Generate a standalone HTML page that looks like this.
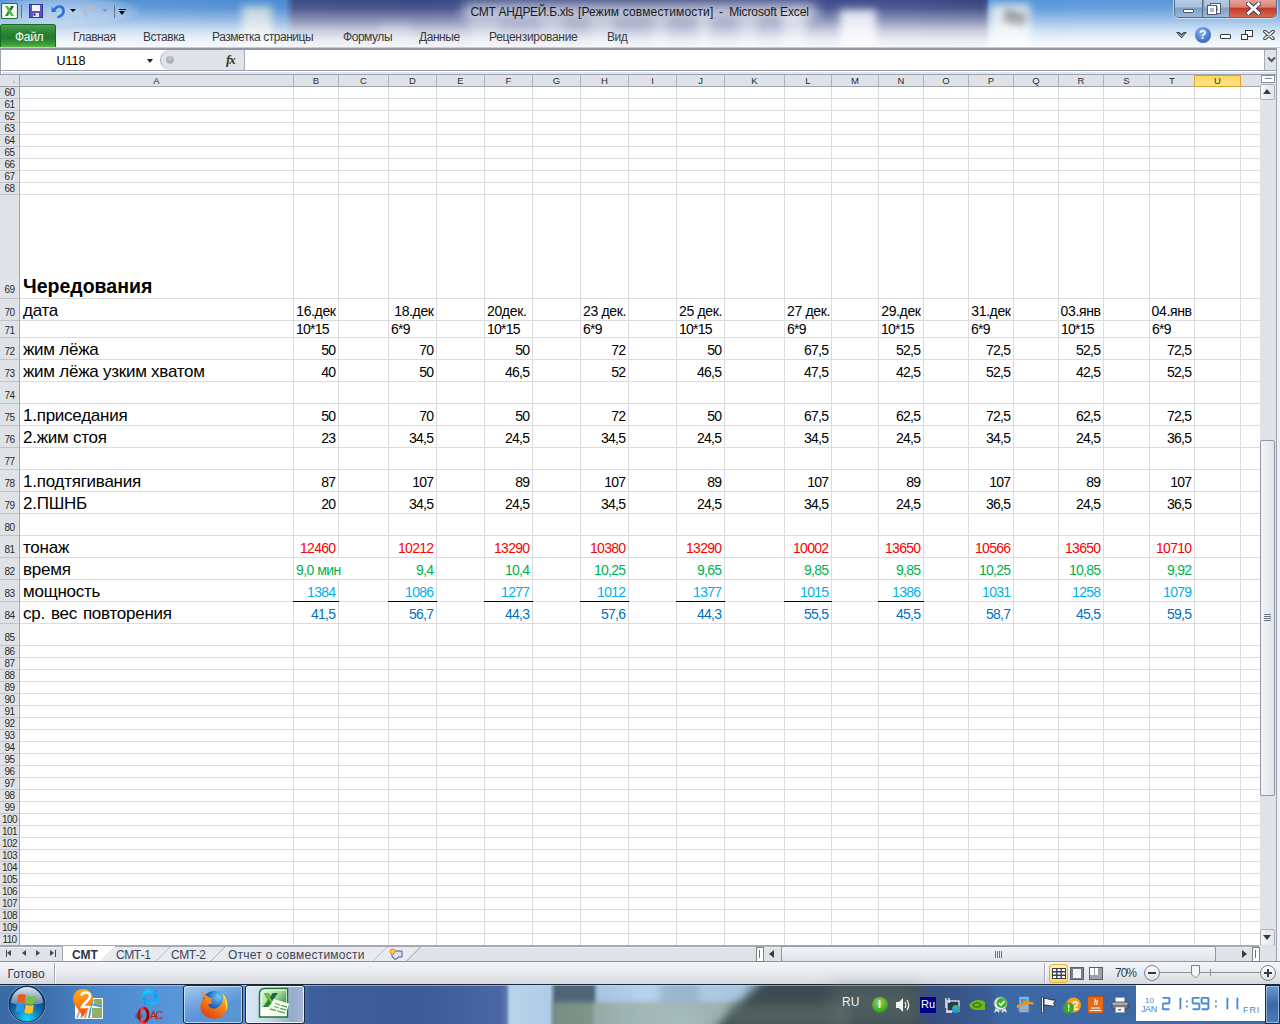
<!DOCTYPE html><html><head><meta charset="utf-8"><style>
*{margin:0;padding:0;box-sizing:border-box}
html,body{width:1280px;height:1024px;overflow:hidden;background:#fff;font-family:"Liberation Sans",sans-serif}
.a{position:absolute}
.t{position:absolute;white-space:nowrap;line-height:1}
.gv{position:absolute;width:1px;background:#dadcdd}
.gh{position:absolute;height:1px;background:#dadcdd}
.rh{position:absolute;left:0;width:19px;text-align:center;font-size:10px;color:#2a2a2a;line-height:1;white-space:nowrap;letter-spacing:-0.6px}
.ch{position:absolute;top:75px;height:11px;font-size:9.5px;color:#2a2a2a;text-align:center;line-height:12px}
.c{position:absolute;white-space:nowrap;line-height:1;color:#000}
.cr{transform-origin:right}
.cl{transform-origin:left}
</style></head><body>

<div class="a" style="left:0;top:0;width:1280px;height:48px;background:linear-gradient(90deg,#5d98d6 0px,#5592d4 150px,#4a8ad2 285px,#3e4c86 294px,#3a4884 420px,#3e4c88 520px,#38457e 640px,#3e4b88 760px,#404e8c 900px,#36457e 986px,#5294da 990px,#5a98da 1100px,#5a9ad8 1280px)"></div>
<div class="a" style="left:242px;top:6px;width:30px;height:40px;background:#dfe8d8;opacity:0.75;filter:blur(4px)"></div>
<div class="a" style="left:652px;top:16px;width:16px;height:32px;background:#e8eef8;opacity:0.35;filter:blur(4px)"></div>
<div class="a" style="left:697px;top:14px;width:14px;height:34px;background:#e8eef8;opacity:0.45;filter:blur(4px)"></div>
<div class="a" style="left:738px;top:14px;width:20px;height:34px;background:#e0e8f4;opacity:0.4;filter:blur(4px)"></div>
<div class="a" style="left:782px;top:12px;width:24px;height:36px;background:#eef2fa;opacity:0.55;filter:blur(4px)"></div>
<div class="a" style="left:840px;top:10px;width:36px;height:38px;background:#f4f7fc;opacity:0.85;filter:blur(4px)"></div>
<div class="a" style="left:990px;top:4px;width:40px;height:46px;background:#e8ece6;opacity:0.85;filter:blur(4px)"></div>
<div class="a" style="left:540px;top:16px;width:24px;height:32px;background:#e8eef8;opacity:0.3;filter:blur(4px)"></div>
<div class="a" style="left:590px;top:16px;width:24px;height:32px;background:#e8eef8;opacity:0.35;filter:blur(4px)"></div>
<div class="a" style="left:470px;top:20px;width:30px;height:28px;background:#e8eef8;opacity:0.3;filter:blur(4px)"></div>
<div class="a" style="left:380px;top:24px;width:30px;height:24px;background:#e8eef8;opacity:0.25;filter:blur(4px)"></div>
<div class="a" style="left:1004px;top:12px;width:22px;height:14px;background:#505560;opacity:0.7;filter:blur(3px);transform:rotate(15deg)"></div>
<div class="a" style="left:0;top:0;width:1280px;height:48px;background:linear-gradient(180deg,rgba(255,255,255,0) 0px,rgba(255,255,255,0.08) 8px,rgba(255,255,255,0.4) 20px,rgba(255,255,255,0.7) 30px,rgba(255,255,255,0.88) 39px,rgba(255,255,255,0.94) 46px)"></div>
<div class="a" style="left:-10px;top:-4px;width:150px;height:30px;background:radial-gradient(ellipse at center,rgba(230,240,250,0.55) 0%,rgba(230,240,250,0.3) 55%,rgba(230,240,250,0) 75%)"></div>
<div class="a" style="left:462px;top:3px;width:356px;height:18px;background:rgba(255,255,255,0.6);border-radius:9px;filter:blur(6px)"></div>
<div class="t" style="left:470.5px;top:6px;font-size:12px;letter-spacing:-0.3px;color:#1a1a1a">СМТ АНДРЕЙ.Б.xls</div>
<div class="t" style="left:578px;top:6px;font-size:12px;letter-spacing:0.15px;color:#1a1a1a">[Режим совместимости]</div>
<div class="t" style="left:719px;top:6px;font-size:12px;letter-spacing:0px;color:#1a1a1a">-</div>
<div class="t" style="left:729.2px;top:6px;font-size:12px;letter-spacing:-0.12px;color:#1a1a1a">Microsoft Excel</div>
<svg class="a" style="left:1px;top:3px" width="17" height="16" viewBox="0 0 17 16">
<rect x="0.5" y="0.5" width="16" height="15" rx="1.5" fill="#f4faf2" stroke="#1d7a34" stroke-width="1.2"/>
<path d="M4 3 L7 3 L13 13 L10 13 Z" fill="#58b848"/>
<path d="M10 3 L13 3 L10 8 L8.5 6 Z" fill="#1d6e36"/>
<path d="M4 13 L7 13 L8.5 10 L7 8 Z" fill="#2e8a3a"/>
</svg>
<div class="a" style="left:21px;top:5px;width:1px;height:13px;background:#6a7380"></div>
<svg class="a" style="left:29px;top:4px" width="15" height="14" viewBox="0 0 15 14">
<rect x="0" y="0" width="14" height="14" rx="1" fill="#5a50c8"/>
<rect x="0.5" y="0.5" width="13" height="13" fill="none" stroke="#3a2fa0" stroke-width="1"/>
<rect x="3" y="1" width="8" height="6" fill="#f4f6fa"/>
<rect x="4" y="9" width="6" height="4" fill="#e8e8ec"/>
<rect x="4.5" y="9.5" width="2" height="2" fill="#111"/>
</svg>
<svg class="a" style="left:51px;top:4px" width="15" height="14" viewBox="0 0 15 14">
<path d="M4 5 C6 1.5 12 1.5 12.5 6 C13 9.5 10 12 7.5 13" fill="none" stroke="#2f6fd8" stroke-width="2.6" stroke-linecap="round"/>
<path d="M0.5 2.5 L0.5 8 L6 8 Z" fill="#2f6fd8"/>
</svg>
<div class="a" style="left:70px;top:9px;width:0;height:0;border-left:3px solid transparent;border-right:3px solid transparent;border-top:3px solid #000"></div>
<svg class="a" style="left:82px;top:4px" width="15" height="13" viewBox="0 0 15 13">
<path d="M11 5 C9 1.5 3 1.5 2.5 6 C2 9 4 11 5 12" fill="none" stroke="#b8bcc0" stroke-width="2.4" stroke-linecap="round"/>
<path d="M14 2 L14 7 L9 7 Z" fill="#b8bcc0"/>
</svg>
<div class="a" style="left:102px;top:9px;width:0;height:0;border-left:3px solid transparent;border-right:3px solid transparent;border-top:3px solid #8c98a8"></div>
<div class="a" style="left:114px;top:5px;width:1px;height:13px;background:#6a7380"></div>
<div class="a" style="left:119px;top:9px;width:7px;height:1px;background:#000"></div>
<div class="a" style="left:119px;top:11px;width:0;height:0;border-left:3.5px solid transparent;border-right:3.5px solid transparent;border-top:4px solid #000"></div>
<div class="a" style="left:1174px;top:-1px;width:103px;height:19px;border:1px solid #5a6a80;border-top:none;border-radius:0 0 5px 5px;overflow:hidden;box-shadow:0 0 0 1px rgba(255,255,255,0.5)">
<div class="a" style="left:0;top:0;width:28px;height:18px;background:linear-gradient(180deg,#b9cde6 0%,#a7bfdc 45%,#7f9cc4 50%,#9db7d8 100%);border-right:1px solid #5a6a80"></div>
<div class="a" style="left:29px;top:0;width:26px;height:18px;background:linear-gradient(180deg,#b9cde6 0%,#a7bfdc 45%,#7f9cc4 50%,#9db7d8 100%);border-right:1px solid #5a6a80"></div>
<div class="a" style="left:55px;top:0;width:48px;height:18px;background:linear-gradient(180deg,#e8a8a0 0%,#d88070 45%,#c83a28 52%,#d86850 100%)"></div>
</div>
<div class="a" style="left:1183px;top:9px;width:11px;height:4px;background:#fff;border:1px solid #505a68;border-radius:1px"></div>
<div class="a" style="left:1211px;top:4px;width:9px;height:9px;border:2px solid #fff;outline:1px solid #505a68"></div>
<div class="a" style="left:1208px;top:6px;width:8px;height:8px;background:#a6bcd8;border:2px solid #fff;outline:1px solid #505a68"></div>
<svg class="a" style="left:1246px;top:2px" width="15" height="13" viewBox="0 0 15 13">
<path d="M2.5 2 L12.5 11 M12.5 2 L2.5 11" stroke="#3a4050" stroke-width="5" stroke-linecap="square"/>
<path d="M2.5 2 L12.5 11 M12.5 2 L2.5 11" stroke="#fff" stroke-width="3" stroke-linecap="square"/>
</svg>
<div class="a" style="left:0;top:24px;width:56px;height:23px;background:linear-gradient(180deg,#48a050 0%,#2a8434 35%,#237c2e 60%,#3a9a3a 85%,#58b840 100%);border:1px solid #1a6a26;border-bottom:none;border-radius:3px 3px 0 0"></div>
<div class="t" style="left:15px;top:31px;font-size:12px;color:#fff;letter-spacing:-0.3px">Файл</div>
<div class="t" style="left:73px;top:31px;font-size:12px;color:#3a3a3a;letter-spacing:-0.45px">Главная</div>
<div class="t" style="left:143px;top:31px;font-size:12px;color:#3a3a3a;letter-spacing:-0.45px">Вставка</div>
<div class="t" style="left:212px;top:31px;font-size:12px;color:#3a3a3a;letter-spacing:-0.45px">Разметка страницы</div>
<div class="t" style="left:343px;top:31px;font-size:12px;color:#3a3a3a;letter-spacing:-0.45px">Формулы</div>
<div class="t" style="left:419px;top:31px;font-size:12px;color:#3a3a3a;letter-spacing:-0.45px">Данные</div>
<div class="t" style="left:489px;top:31px;font-size:12px;color:#3a3a3a;letter-spacing:-0.3px">Рецензирование</div>
<div class="t" style="left:607px;top:31px;font-size:12px;color:#3a3a3a;letter-spacing:-0.45px">Вид</div>
<svg class="a" style="left:1176px;top:31px" width="11" height="8" viewBox="0 0 11 8"><path d="M1 1.5 L3 1.5 L5.5 4 L8 1.5 L10 1.5 L5.5 6.5 Z" fill="#fff" stroke="#3a3a3a" stroke-width="1.1" stroke-linejoin="round"/></svg>
<div class="a" style="left:1195px;top:27px;width:16px;height:16px;border-radius:50%;background:radial-gradient(circle at 40% 30%,#8ab4f0,#3a70c8 70%,#2a5aa8);"></div>
<div class="t" style="left:1199px;top:29px;font-size:12px;font-weight:bold;color:#fff">?</div>
<div class="a" style="left:1220px;top:34px;width:11px;height:5px;background:#fff;border:1px solid #3a3a3a;border-radius:1px"></div>
<div class="a" style="left:1245px;top:30px;width:8px;height:7px;border:1.5px solid #3a3a3a;background:#fff"></div>
<div class="a" style="left:1241px;top:34px;width:7px;height:6px;border:1.5px solid #3a3a3a;background:#fff"></div>
<svg class="a" style="left:1263px;top:30px" width="12" height="10" viewBox="0 0 12 10"><path d="M2 1.5 L10 8.5 M10 1.5 L2 8.5" stroke="#3a3a3a" stroke-width="3.6" stroke-linecap="round"/><path d="M2 1.5 L10 8.5 M10 1.5 L2 8.5" stroke="#fff" stroke-width="1.6" stroke-linecap="round"/></svg>
<div class="a" style="left:0;top:47px;width:1280px;height:1px;background:#b4d0ee"></div>
<div class="a" style="left:0;top:48px;width:1280px;height:27px;background:#fff"></div>
<div class="a" style="left:0;top:48px;width:1280px;height:2px;background:#8e98a4"></div>
<div class="a" style="left:0;top:70px;width:1280px;height:1px;background:#9aa2ac"></div>
<div class="a" style="left:2px;top:72px;width:1274px;height:2px;background:#e2e6f2"></div>
<div class="a" style="left:0;top:74px;width:1280px;height:1px;background:#9aa2ac"></div>
<div class="a" style="left:0;top:48px;width:1px;height:38px;background:#9aa2ac"></div>
<div class="t" style="left:56.5px;top:54.5px;font-size:12.5px;color:#000">U118</div>
<div class="a" style="left:147px;top:59px;width:0;height:0;border-left:3.5px solid transparent;border-right:3.5px solid transparent;border-top:4px solid #222"></div>
<div class="a" style="left:160px;top:50px;width:85px;height:20px;background:#dfe2e7;border-radius:11px 0 0 11px;border-left:1px solid #a8aeb6;border-right:1px solid #a8aeb6"></div>
<div class="a" style="left:166px;top:56px;width:8px;height:8px;border-radius:50%;background:radial-gradient(circle at 50% 35%,#c8ccd2,#a8acb4 60%,#f0f2f4 100%)"></div>
<div class="t" style="left:226px;top:53px;font-size:13px;font-style:italic;font-weight:bold;font-family:'Liberation Serif',serif;color:#333;letter-spacing:-1px">fx</div>
<div class="a" style="left:1264px;top:50px;width:15px;height:20px;background:#dfe2e7;border-left:1px solid #a8aeb6"></div>
<div class="a" style="left:1279px;top:48px;width:1px;height:27px;background:#9aa2ac"></div>
<svg class="a" style="left:1266px;top:56px" width="11" height="8" viewBox="0 0 11 8"><path d="M2 1.5 L5.5 5 L9 1.5" fill="none" stroke="#555" stroke-width="2"/></svg>
<div class="a" style="left:0;top:75px;width:1260px;height:11px;background:#dfe3e8"></div>
<div class="a" style="left:0;top:86px;width:19px;height:859px;background:#dfe3e8"></div>
<div class="a" style="left:0;top:86px;width:1260px;height:1px;background:#9ea5ad"></div>
<div class="a" style="left:19px;top:75px;width:1px;height:870px;background:#9ea5ad"></div>
<svg class="a" style="left:12px;top:80px" width="3" height="3" viewBox="0 0 3 3"><path d="M3 0 L3 3 L0 3 Z" fill="#c0c5cc"/></svg>
<div class="a" style="left:1194px;top:75px;width:47px;height:12px;background:linear-gradient(#ffd65a,#ffe690);border:1px solid #dfa030"></div>
<div class="ch" style="left:20px;width:273px">A</div>
<div class="a" style="left:293px;top:75px;width:1px;height:11px;background:#aeb4bc"></div>
<div class="ch" style="left:294px;width:44px">B</div>
<div class="a" style="left:338px;top:75px;width:1px;height:11px;background:#aeb4bc"></div>
<div class="ch" style="left:339px;width:49px">C</div>
<div class="a" style="left:388px;top:75px;width:1px;height:11px;background:#aeb4bc"></div>
<div class="ch" style="left:389px;width:47px">D</div>
<div class="a" style="left:436px;top:75px;width:1px;height:11px;background:#aeb4bc"></div>
<div class="ch" style="left:437px;width:47px">E</div>
<div class="a" style="left:484px;top:75px;width:1px;height:11px;background:#aeb4bc"></div>
<div class="ch" style="left:485px;width:47px">F</div>
<div class="a" style="left:532px;top:75px;width:1px;height:11px;background:#aeb4bc"></div>
<div class="ch" style="left:533px;width:47px">G</div>
<div class="a" style="left:580px;top:75px;width:1px;height:11px;background:#aeb4bc"></div>
<div class="ch" style="left:581px;width:47px">H</div>
<div class="a" style="left:628px;top:75px;width:1px;height:11px;background:#aeb4bc"></div>
<div class="ch" style="left:629px;width:47px">I</div>
<div class="a" style="left:676px;top:75px;width:1px;height:11px;background:#aeb4bc"></div>
<div class="ch" style="left:677px;width:47px">J</div>
<div class="a" style="left:724px;top:75px;width:1px;height:11px;background:#aeb4bc"></div>
<div class="ch" style="left:725px;width:59px">K</div>
<div class="a" style="left:784px;top:75px;width:1px;height:11px;background:#aeb4bc"></div>
<div class="ch" style="left:785px;width:46px">L</div>
<div class="a" style="left:831px;top:75px;width:1px;height:11px;background:#aeb4bc"></div>
<div class="ch" style="left:832px;width:46px">M</div>
<div class="a" style="left:878px;top:75px;width:1px;height:11px;background:#aeb4bc"></div>
<div class="ch" style="left:879px;width:44px">N</div>
<div class="a" style="left:923px;top:75px;width:1px;height:11px;background:#aeb4bc"></div>
<div class="ch" style="left:924px;width:44px">O</div>
<div class="a" style="left:968px;top:75px;width:1px;height:11px;background:#aeb4bc"></div>
<div class="ch" style="left:969px;width:44px">P</div>
<div class="a" style="left:1013px;top:75px;width:1px;height:11px;background:#aeb4bc"></div>
<div class="ch" style="left:1014px;width:44px">Q</div>
<div class="a" style="left:1058px;top:75px;width:1px;height:11px;background:#aeb4bc"></div>
<div class="ch" style="left:1059px;width:44px">R</div>
<div class="a" style="left:1103px;top:75px;width:1px;height:11px;background:#aeb4bc"></div>
<div class="ch" style="left:1104px;width:45px">S</div>
<div class="a" style="left:1149px;top:75px;width:1px;height:11px;background:#aeb4bc"></div>
<div class="ch" style="left:1150px;width:44px">T</div>
<div class="ch" style="left:1195px;width:45px">U</div>
<div class="gv" style="left:293px;top:87px;height:858px"></div>
<div class="gv" style="left:338px;top:87px;height:858px"></div>
<div class="gv" style="left:388px;top:87px;height:858px"></div>
<div class="gv" style="left:436px;top:87px;height:858px"></div>
<div class="gv" style="left:484px;top:87px;height:858px"></div>
<div class="gv" style="left:532px;top:87px;height:858px"></div>
<div class="gv" style="left:580px;top:87px;height:858px"></div>
<div class="gv" style="left:628px;top:87px;height:858px"></div>
<div class="gv" style="left:676px;top:87px;height:858px"></div>
<div class="gv" style="left:724px;top:87px;height:858px"></div>
<div class="gv" style="left:784px;top:87px;height:858px"></div>
<div class="gv" style="left:831px;top:87px;height:858px"></div>
<div class="gv" style="left:878px;top:87px;height:858px"></div>
<div class="gv" style="left:923px;top:87px;height:858px"></div>
<div class="gv" style="left:968px;top:87px;height:858px"></div>
<div class="gv" style="left:1013px;top:87px;height:858px"></div>
<div class="gv" style="left:1058px;top:87px;height:858px"></div>
<div class="gv" style="left:1103px;top:87px;height:858px"></div>
<div class="gv" style="left:1149px;top:87px;height:858px"></div>
<div class="gv" style="left:1194px;top:87px;height:858px"></div>
<div class="gv" style="left:1240px;top:87px;height:858px"></div>
<div class="gh" style="left:20px;top:98px;width:1240px"></div>
<div class="gh" style="left:20px;top:110px;width:1240px"></div>
<div class="gh" style="left:20px;top:122px;width:1240px"></div>
<div class="gh" style="left:20px;top:134px;width:1240px"></div>
<div class="gh" style="left:20px;top:146px;width:1240px"></div>
<div class="gh" style="left:20px;top:158px;width:1240px"></div>
<div class="gh" style="left:20px;top:170px;width:1240px"></div>
<div class="gh" style="left:20px;top:182px;width:1240px"></div>
<div class="gh" style="left:20px;top:194px;width:1240px"></div>
<div class="gh" style="left:20px;top:298px;width:1240px"></div>
<div class="gh" style="left:20px;top:320px;width:1240px"></div>
<div class="gh" style="left:20px;top:337px;width:1240px"></div>
<div class="gh" style="left:20px;top:359px;width:1240px"></div>
<div class="gh" style="left:20px;top:381px;width:1240px"></div>
<div class="gh" style="left:20px;top:403px;width:1240px"></div>
<div class="gh" style="left:20px;top:425px;width:1240px"></div>
<div class="gh" style="left:20px;top:447px;width:1240px"></div>
<div class="gh" style="left:20px;top:469px;width:1240px"></div>
<div class="gh" style="left:20px;top:491px;width:1240px"></div>
<div class="gh" style="left:20px;top:513px;width:1240px"></div>
<div class="gh" style="left:20px;top:535px;width:1240px"></div>
<div class="gh" style="left:20px;top:557px;width:1240px"></div>
<div class="gh" style="left:20px;top:579px;width:1240px"></div>
<div class="gh" style="left:20px;top:601px;width:1240px"></div>
<div class="gh" style="left:20px;top:623px;width:1240px"></div>
<div class="gh" style="left:20px;top:645px;width:1240px"></div>
<div class="gh" style="left:20px;top:657px;width:1240px"></div>
<div class="gh" style="left:20px;top:669px;width:1240px"></div>
<div class="gh" style="left:20px;top:681px;width:1240px"></div>
<div class="gh" style="left:20px;top:693px;width:1240px"></div>
<div class="gh" style="left:20px;top:705px;width:1240px"></div>
<div class="gh" style="left:20px;top:717px;width:1240px"></div>
<div class="gh" style="left:20px;top:729px;width:1240px"></div>
<div class="gh" style="left:20px;top:741px;width:1240px"></div>
<div class="gh" style="left:20px;top:753px;width:1240px"></div>
<div class="gh" style="left:20px;top:765px;width:1240px"></div>
<div class="gh" style="left:20px;top:777px;width:1240px"></div>
<div class="gh" style="left:20px;top:789px;width:1240px"></div>
<div class="gh" style="left:20px;top:801px;width:1240px"></div>
<div class="gh" style="left:20px;top:813px;width:1240px"></div>
<div class="gh" style="left:20px;top:825px;width:1240px"></div>
<div class="gh" style="left:20px;top:837px;width:1240px"></div>
<div class="gh" style="left:20px;top:849px;width:1240px"></div>
<div class="gh" style="left:20px;top:861px;width:1240px"></div>
<div class="gh" style="left:20px;top:873px;width:1240px"></div>
<div class="gh" style="left:20px;top:885px;width:1240px"></div>
<div class="gh" style="left:20px;top:897px;width:1240px"></div>
<div class="gh" style="left:20px;top:909px;width:1240px"></div>
<div class="gh" style="left:20px;top:921px;width:1240px"></div>
<div class="gh" style="left:20px;top:933px;width:1240px"></div>
<div class="gh" style="left:20px;top:945px;width:1240px"></div>
<div class="a" style="left:0;top:98px;width:19px;height:1px;background:#c0c5cc"></div>
<div class="rh" style="top:88.03px">60</div>
<div class="a" style="left:0;top:110px;width:19px;height:1px;background:#c0c5cc"></div>
<div class="rh" style="top:100.03px">61</div>
<div class="a" style="left:0;top:122px;width:19px;height:1px;background:#c0c5cc"></div>
<div class="rh" style="top:112.03px">62</div>
<div class="a" style="left:0;top:134px;width:19px;height:1px;background:#c0c5cc"></div>
<div class="rh" style="top:124.03px">63</div>
<div class="a" style="left:0;top:146px;width:19px;height:1px;background:#c0c5cc"></div>
<div class="rh" style="top:136.03px">64</div>
<div class="a" style="left:0;top:158px;width:19px;height:1px;background:#c0c5cc"></div>
<div class="rh" style="top:148.03px">65</div>
<div class="a" style="left:0;top:170px;width:19px;height:1px;background:#c0c5cc"></div>
<div class="rh" style="top:160.03px">66</div>
<div class="a" style="left:0;top:182px;width:19px;height:1px;background:#c0c5cc"></div>
<div class="rh" style="top:172.03px">67</div>
<div class="a" style="left:0;top:194px;width:19px;height:1px;background:#c0c5cc"></div>
<div class="rh" style="top:184.03px">68</div>
<div class="a" style="left:0;top:298px;width:19px;height:1px;background:#c0c5cc"></div>
<div class="rh" style="top:285.04px">69</div>
<div class="a" style="left:0;top:320px;width:19px;height:1px;background:#c0c5cc"></div>
<div class="rh" style="top:308.04px">70</div>
<div class="a" style="left:0;top:337px;width:19px;height:1px;background:#c0c5cc"></div>
<div class="rh" style="top:326.04px">71</div>
<div class="a" style="left:0;top:359px;width:19px;height:1px;background:#c0c5cc"></div>
<div class="rh" style="top:347.04px">72</div>
<div class="a" style="left:0;top:381px;width:19px;height:1px;background:#c0c5cc"></div>
<div class="rh" style="top:369.04px">73</div>
<div class="a" style="left:0;top:403px;width:19px;height:1px;background:#c0c5cc"></div>
<div class="rh" style="top:391.04px">74</div>
<div class="a" style="left:0;top:425px;width:19px;height:1px;background:#c0c5cc"></div>
<div class="rh" style="top:413.04px">75</div>
<div class="a" style="left:0;top:447px;width:19px;height:1px;background:#c0c5cc"></div>
<div class="rh" style="top:435.04px">76</div>
<div class="a" style="left:0;top:469px;width:19px;height:1px;background:#c0c5cc"></div>
<div class="rh" style="top:457.04px">77</div>
<div class="a" style="left:0;top:491px;width:19px;height:1px;background:#c0c5cc"></div>
<div class="rh" style="top:479.04px">78</div>
<div class="a" style="left:0;top:513px;width:19px;height:1px;background:#c0c5cc"></div>
<div class="rh" style="top:501.04px">79</div>
<div class="a" style="left:0;top:535px;width:19px;height:1px;background:#c0c5cc"></div>
<div class="rh" style="top:523.03px">80</div>
<div class="a" style="left:0;top:557px;width:19px;height:1px;background:#c0c5cc"></div>
<div class="rh" style="top:545.03px">81</div>
<div class="a" style="left:0;top:579px;width:19px;height:1px;background:#c0c5cc"></div>
<div class="rh" style="top:567.03px">82</div>
<div class="a" style="left:0;top:601px;width:19px;height:1px;background:#c0c5cc"></div>
<div class="rh" style="top:589.03px">83</div>
<div class="a" style="left:0;top:623px;width:19px;height:1px;background:#c0c5cc"></div>
<div class="rh" style="top:611.03px">84</div>
<div class="a" style="left:0;top:645px;width:19px;height:1px;background:#c0c5cc"></div>
<div class="rh" style="top:633.03px">85</div>
<div class="a" style="left:0;top:657px;width:19px;height:1px;background:#c0c5cc"></div>
<div class="rh" style="top:647.03px">86</div>
<div class="a" style="left:0;top:669px;width:19px;height:1px;background:#c0c5cc"></div>
<div class="rh" style="top:659.03px">87</div>
<div class="a" style="left:0;top:681px;width:19px;height:1px;background:#c0c5cc"></div>
<div class="rh" style="top:671.03px">88</div>
<div class="a" style="left:0;top:693px;width:19px;height:1px;background:#c0c5cc"></div>
<div class="rh" style="top:683.03px">89</div>
<div class="a" style="left:0;top:705px;width:19px;height:1px;background:#c0c5cc"></div>
<div class="rh" style="top:695.03px">90</div>
<div class="a" style="left:0;top:717px;width:19px;height:1px;background:#c0c5cc"></div>
<div class="rh" style="top:707.03px">91</div>
<div class="a" style="left:0;top:729px;width:19px;height:1px;background:#c0c5cc"></div>
<div class="rh" style="top:719.03px">92</div>
<div class="a" style="left:0;top:741px;width:19px;height:1px;background:#c0c5cc"></div>
<div class="rh" style="top:731.03px">93</div>
<div class="a" style="left:0;top:753px;width:19px;height:1px;background:#c0c5cc"></div>
<div class="rh" style="top:743.03px">94</div>
<div class="a" style="left:0;top:765px;width:19px;height:1px;background:#c0c5cc"></div>
<div class="rh" style="top:755.03px">95</div>
<div class="a" style="left:0;top:777px;width:19px;height:1px;background:#c0c5cc"></div>
<div class="rh" style="top:767.03px">96</div>
<div class="a" style="left:0;top:789px;width:19px;height:1px;background:#c0c5cc"></div>
<div class="rh" style="top:779.03px">97</div>
<div class="a" style="left:0;top:801px;width:19px;height:1px;background:#c0c5cc"></div>
<div class="rh" style="top:791.03px">98</div>
<div class="a" style="left:0;top:813px;width:19px;height:1px;background:#c0c5cc"></div>
<div class="rh" style="top:803.03px">99</div>
<div class="a" style="left:0;top:825px;width:19px;height:1px;background:#c0c5cc"></div>
<div class="rh" style="top:815.03px">100</div>
<div class="a" style="left:0;top:837px;width:19px;height:1px;background:#c0c5cc"></div>
<div class="rh" style="top:827.03px">101</div>
<div class="a" style="left:0;top:849px;width:19px;height:1px;background:#c0c5cc"></div>
<div class="rh" style="top:839.03px">102</div>
<div class="a" style="left:0;top:861px;width:19px;height:1px;background:#c0c5cc"></div>
<div class="rh" style="top:851.03px">103</div>
<div class="a" style="left:0;top:873px;width:19px;height:1px;background:#c0c5cc"></div>
<div class="rh" style="top:863.03px">104</div>
<div class="a" style="left:0;top:885px;width:19px;height:1px;background:#c0c5cc"></div>
<div class="rh" style="top:875.03px">105</div>
<div class="a" style="left:0;top:897px;width:19px;height:1px;background:#c0c5cc"></div>
<div class="rh" style="top:887.03px">106</div>
<div class="a" style="left:0;top:909px;width:19px;height:1px;background:#c0c5cc"></div>
<div class="rh" style="top:899.03px">107</div>
<div class="a" style="left:0;top:921px;width:19px;height:1px;background:#c0c5cc"></div>
<div class="rh" style="top:911.03px">108</div>
<div class="a" style="left:0;top:933px;width:19px;height:1px;background:#c0c5cc"></div>
<div class="rh" style="top:923.03px">109</div>
<div class="a" style="left:0;top:945px;width:19px;height:1px;background:#c0c5cc"></div>
<div class="rh" style="top:935.03px">110</div>
<div class="a" style="left:0;top:945px;width:1260px;height:1px;background:#9ea5ad"></div>
<div class="c" style="left:23px;top:277.49px;font-size:19.5px;font-weight:bold">Чередования</div>
<div class="c" style="left:23px;top:301.61px;font-size:17px;letter-spacing:-0.25px;word-spacing:0px">дата</div>
<div class="c" style="left:23px;top:340.61px;font-size:17px;letter-spacing:-0.25px;word-spacing:0px">жим лёжа</div>
<div class="c" style="left:23px;top:362.61px;font-size:17px;letter-spacing:-0.25px;word-spacing:0px">жим лёжа узким хватом</div>
<div class="c" style="left:23px;top:406.61px;font-size:17px;letter-spacing:-0.25px;word-spacing:0px">1.приседания</div>
<div class="c" style="left:23px;top:428.61px;font-size:17px;letter-spacing:-0.25px;word-spacing:0px">2.жим стоя</div>
<div class="c" style="left:23px;top:472.61px;font-size:17px;letter-spacing:-0.25px;word-spacing:0px">1.подтягивания</div>
<div class="c" style="left:23px;top:494.61px;font-size:17px;letter-spacing:-0.25px;word-spacing:0px">2.ПШНБ</div>
<div class="c" style="left:23px;top:538.61px;font-size:17px;letter-spacing:-0.25px;word-spacing:0px">тонаж</div>
<div class="c" style="left:23px;top:560.61px;font-size:17px;letter-spacing:-0.25px;word-spacing:0px">время</div>
<div class="c" style="left:23px;top:582.61px;font-size:17px;letter-spacing:-0.25px;word-spacing:0px">мощность</div>
<div class="c" style="left:23px;top:604.61px;font-size:17px;letter-spacing:-0.25px;word-spacing:1.5px">ср. вес повторения</div>
<div class="c cr" style="right:944.35px;top:304.15px;font-size:14px;color:#000;letter-spacing:-0.35px">16.дек</div>
<div class="c cr" style="right:846.35px;top:304.15px;font-size:14px;color:#000;letter-spacing:-0.35px">18.дек</div>
<div class="c cl" style="left:487px;top:304.15px;font-size:14px;color:#000;letter-spacing:-0.35px">20дек.</div>
<div class="c cl" style="left:583px;top:304.15px;font-size:14px;color:#000;letter-spacing:-0.35px">23 дек.</div>
<div class="c cl" style="left:679px;top:304.15px;font-size:14px;color:#000;letter-spacing:-0.35px">25 дек.</div>
<div class="c cl" style="left:787px;top:304.15px;font-size:14px;color:#000;letter-spacing:-0.35px">27 дек.</div>
<div class="c cr" style="right:359.35px;top:304.15px;font-size:14px;color:#000;letter-spacing:-0.35px">29.дек</div>
<div class="c cr" style="right:269.35px;top:304.15px;font-size:14px;color:#000;letter-spacing:-0.35px">31.дек</div>
<div class="c cr" style="right:179.35px;top:304.15px;font-size:14px;color:#000;letter-spacing:-0.35px">03.янв</div>
<div class="c cr" style="right:88.35px;top:304.15px;font-size:14px;color:#000;letter-spacing:-0.35px">04.янв</div>
<div class="c cl" style="left:296px;top:322.15px;font-size:14px;color:#000;letter-spacing:-0.75px">10*15</div>
<div class="c cl" style="left:391px;top:322.15px;font-size:14px;color:#000;letter-spacing:-0.75px">6*9</div>
<div class="c cl" style="left:487px;top:322.15px;font-size:14px;color:#000;letter-spacing:-0.75px">10*15</div>
<div class="c cl" style="left:583px;top:322.15px;font-size:14px;color:#000;letter-spacing:-0.75px">6*9</div>
<div class="c cl" style="left:679px;top:322.15px;font-size:14px;color:#000;letter-spacing:-0.75px">10*15</div>
<div class="c cl" style="left:787px;top:322.15px;font-size:14px;color:#000;letter-spacing:-0.75px">6*9</div>
<div class="c cl" style="left:881px;top:322.15px;font-size:14px;color:#000;letter-spacing:-0.75px">10*15</div>
<div class="c cl" style="left:971px;top:322.15px;font-size:14px;color:#000;letter-spacing:-0.75px">6*9</div>
<div class="c cl" style="left:1061px;top:322.15px;font-size:14px;color:#000;letter-spacing:-0.75px">10*15</div>
<div class="c cl" style="left:1152px;top:322.15px;font-size:14px;color:#000;letter-spacing:-0.75px">6*9</div>
<div class="a" style="left:338px;top:558px;width:1px;height:21px;background:#fff"></div>
<div class="c cr" style="right:944.75px;top:343.15px;font-size:14px;color:#000;letter-spacing:-0.75px">50</div>
<div class="c cr" style="right:846.75px;top:343.15px;font-size:14px;color:#000;letter-spacing:-0.75px">70</div>
<div class="c cr" style="right:750.75px;top:343.15px;font-size:14px;color:#000;letter-spacing:-0.75px">50</div>
<div class="c cr" style="right:654.75px;top:343.15px;font-size:14px;color:#000;letter-spacing:-0.75px">72</div>
<div class="c cr" style="right:558.75px;top:343.15px;font-size:14px;color:#000;letter-spacing:-0.75px">50</div>
<div class="c cr" style="right:451.75px;top:343.15px;font-size:14px;color:#000;letter-spacing:-0.75px">67,5</div>
<div class="c cr" style="right:359.75px;top:343.15px;font-size:14px;color:#000;letter-spacing:-0.75px">52,5</div>
<div class="c cr" style="right:269.75px;top:343.15px;font-size:14px;color:#000;letter-spacing:-0.75px">72,5</div>
<div class="c cr" style="right:179.75px;top:343.15px;font-size:14px;color:#000;letter-spacing:-0.75px">52,5</div>
<div class="c cr" style="right:88.75px;top:343.15px;font-size:14px;color:#000;letter-spacing:-0.75px">72,5</div>
<div class="c cr" style="right:944.75px;top:365.15px;font-size:14px;color:#000;letter-spacing:-0.75px">40</div>
<div class="c cr" style="right:846.75px;top:365.15px;font-size:14px;color:#000;letter-spacing:-0.75px">50</div>
<div class="c cr" style="right:750.75px;top:365.15px;font-size:14px;color:#000;letter-spacing:-0.75px">46,5</div>
<div class="c cr" style="right:654.75px;top:365.15px;font-size:14px;color:#000;letter-spacing:-0.75px">52</div>
<div class="c cr" style="right:558.75px;top:365.15px;font-size:14px;color:#000;letter-spacing:-0.75px">46,5</div>
<div class="c cr" style="right:451.75px;top:365.15px;font-size:14px;color:#000;letter-spacing:-0.75px">47,5</div>
<div class="c cr" style="right:359.75px;top:365.15px;font-size:14px;color:#000;letter-spacing:-0.75px">42,5</div>
<div class="c cr" style="right:269.75px;top:365.15px;font-size:14px;color:#000;letter-spacing:-0.75px">52,5</div>
<div class="c cr" style="right:179.75px;top:365.15px;font-size:14px;color:#000;letter-spacing:-0.75px">42,5</div>
<div class="c cr" style="right:88.75px;top:365.15px;font-size:14px;color:#000;letter-spacing:-0.75px">52,5</div>
<div class="c cr" style="right:944.75px;top:409.15px;font-size:14px;color:#000;letter-spacing:-0.75px">50</div>
<div class="c cr" style="right:846.75px;top:409.15px;font-size:14px;color:#000;letter-spacing:-0.75px">70</div>
<div class="c cr" style="right:750.75px;top:409.15px;font-size:14px;color:#000;letter-spacing:-0.75px">50</div>
<div class="c cr" style="right:654.75px;top:409.15px;font-size:14px;color:#000;letter-spacing:-0.75px">72</div>
<div class="c cr" style="right:558.75px;top:409.15px;font-size:14px;color:#000;letter-spacing:-0.75px">50</div>
<div class="c cr" style="right:451.75px;top:409.15px;font-size:14px;color:#000;letter-spacing:-0.75px">67,5</div>
<div class="c cr" style="right:359.75px;top:409.15px;font-size:14px;color:#000;letter-spacing:-0.75px">62,5</div>
<div class="c cr" style="right:269.75px;top:409.15px;font-size:14px;color:#000;letter-spacing:-0.75px">72,5</div>
<div class="c cr" style="right:179.75px;top:409.15px;font-size:14px;color:#000;letter-spacing:-0.75px">62,5</div>
<div class="c cr" style="right:88.75px;top:409.15px;font-size:14px;color:#000;letter-spacing:-0.75px">72,5</div>
<div class="c cr" style="right:944.75px;top:431.15px;font-size:14px;color:#000;letter-spacing:-0.75px">23</div>
<div class="c cr" style="right:846.75px;top:431.15px;font-size:14px;color:#000;letter-spacing:-0.75px">34,5</div>
<div class="c cr" style="right:750.75px;top:431.15px;font-size:14px;color:#000;letter-spacing:-0.75px">24,5</div>
<div class="c cr" style="right:654.75px;top:431.15px;font-size:14px;color:#000;letter-spacing:-0.75px">34,5</div>
<div class="c cr" style="right:558.75px;top:431.15px;font-size:14px;color:#000;letter-spacing:-0.75px">24,5</div>
<div class="c cr" style="right:451.75px;top:431.15px;font-size:14px;color:#000;letter-spacing:-0.75px">34,5</div>
<div class="c cr" style="right:359.75px;top:431.15px;font-size:14px;color:#000;letter-spacing:-0.75px">24,5</div>
<div class="c cr" style="right:269.75px;top:431.15px;font-size:14px;color:#000;letter-spacing:-0.75px">34,5</div>
<div class="c cr" style="right:179.75px;top:431.15px;font-size:14px;color:#000;letter-spacing:-0.75px">24,5</div>
<div class="c cr" style="right:88.75px;top:431.15px;font-size:14px;color:#000;letter-spacing:-0.75px">36,5</div>
<div class="c cr" style="right:944.75px;top:475.15px;font-size:14px;color:#000;letter-spacing:-0.75px">87</div>
<div class="c cr" style="right:846.75px;top:475.15px;font-size:14px;color:#000;letter-spacing:-0.75px">107</div>
<div class="c cr" style="right:750.75px;top:475.15px;font-size:14px;color:#000;letter-spacing:-0.75px">89</div>
<div class="c cr" style="right:654.75px;top:475.15px;font-size:14px;color:#000;letter-spacing:-0.75px">107</div>
<div class="c cr" style="right:558.75px;top:475.15px;font-size:14px;color:#000;letter-spacing:-0.75px">89</div>
<div class="c cr" style="right:451.75px;top:475.15px;font-size:14px;color:#000;letter-spacing:-0.75px">107</div>
<div class="c cr" style="right:359.75px;top:475.15px;font-size:14px;color:#000;letter-spacing:-0.75px">89</div>
<div class="c cr" style="right:269.75px;top:475.15px;font-size:14px;color:#000;letter-spacing:-0.75px">107</div>
<div class="c cr" style="right:179.75px;top:475.15px;font-size:14px;color:#000;letter-spacing:-0.75px">89</div>
<div class="c cr" style="right:88.75px;top:475.15px;font-size:14px;color:#000;letter-spacing:-0.75px">107</div>
<div class="c cr" style="right:944.75px;top:497.15px;font-size:14px;color:#000;letter-spacing:-0.75px">20</div>
<div class="c cr" style="right:846.75px;top:497.15px;font-size:14px;color:#000;letter-spacing:-0.75px">34,5</div>
<div class="c cr" style="right:750.75px;top:497.15px;font-size:14px;color:#000;letter-spacing:-0.75px">24,5</div>
<div class="c cr" style="right:654.75px;top:497.15px;font-size:14px;color:#000;letter-spacing:-0.75px">34,5</div>
<div class="c cr" style="right:558.75px;top:497.15px;font-size:14px;color:#000;letter-spacing:-0.75px">24,5</div>
<div class="c cr" style="right:451.75px;top:497.15px;font-size:14px;color:#000;letter-spacing:-0.75px">34,5</div>
<div class="c cr" style="right:359.75px;top:497.15px;font-size:14px;color:#000;letter-spacing:-0.75px">24,5</div>
<div class="c cr" style="right:269.75px;top:497.15px;font-size:14px;color:#000;letter-spacing:-0.75px">36,5</div>
<div class="c cr" style="right:179.75px;top:497.15px;font-size:14px;color:#000;letter-spacing:-0.75px">24,5</div>
<div class="c cr" style="right:88.75px;top:497.15px;font-size:14px;color:#000;letter-spacing:-0.75px">36,5</div>
<div class="c cr" style="right:944.75px;top:541.15px;font-size:14px;color:#ff0000;letter-spacing:-0.75px">12460</div>
<div class="c cr" style="right:846.75px;top:541.15px;font-size:14px;color:#ff0000;letter-spacing:-0.75px">10212</div>
<div class="c cr" style="right:750.75px;top:541.15px;font-size:14px;color:#ff0000;letter-spacing:-0.75px">13290</div>
<div class="c cr" style="right:654.75px;top:541.15px;font-size:14px;color:#ff0000;letter-spacing:-0.75px">10380</div>
<div class="c cr" style="right:558.75px;top:541.15px;font-size:14px;color:#ff0000;letter-spacing:-0.75px">13290</div>
<div class="c cr" style="right:451.75px;top:541.15px;font-size:14px;color:#ff0000;letter-spacing:-0.75px">10002</div>
<div class="c cr" style="right:359.75px;top:541.15px;font-size:14px;color:#ff0000;letter-spacing:-0.75px">13650</div>
<div class="c cr" style="right:269.75px;top:541.15px;font-size:14px;color:#ff0000;letter-spacing:-0.75px">10566</div>
<div class="c cr" style="right:179.75px;top:541.15px;font-size:14px;color:#ff0000;letter-spacing:-0.75px">13650</div>
<div class="c cr" style="right:88.75px;top:541.15px;font-size:14px;color:#ff0000;letter-spacing:-0.75px">10710</div>
<div class="c cl" style="left:296px;top:563.15px;font-size:14px;color:#00b050;letter-spacing:-0.55px">9,0 мин</div>
<div class="c cr" style="right:846.75px;top:563.15px;font-size:14px;color:#00b050;letter-spacing:-0.75px">9,4</div>
<div class="c cr" style="right:750.75px;top:563.15px;font-size:14px;color:#00b050;letter-spacing:-0.75px">10,4</div>
<div class="c cr" style="right:654.75px;top:563.15px;font-size:14px;color:#00b050;letter-spacing:-0.75px">10,25</div>
<div class="c cr" style="right:558.75px;top:563.15px;font-size:14px;color:#00b050;letter-spacing:-0.75px">9,65</div>
<div class="c cr" style="right:451.75px;top:563.15px;font-size:14px;color:#00b050;letter-spacing:-0.75px">9,85</div>
<div class="c cr" style="right:359.75px;top:563.15px;font-size:14px;color:#00b050;letter-spacing:-0.75px">9,85</div>
<div class="c cr" style="right:269.75px;top:563.15px;font-size:14px;color:#00b050;letter-spacing:-0.75px">10,25</div>
<div class="c cr" style="right:179.75px;top:563.15px;font-size:14px;color:#00b050;letter-spacing:-0.75px">10,85</div>
<div class="c cr" style="right:88.75px;top:563.15px;font-size:14px;color:#00b050;letter-spacing:-0.75px">9,92</div>
<div class="c cr" style="right:944.75px;top:585.15px;font-size:14px;color:#00b0f0;letter-spacing:-0.75px">1384</div>
<div class="c cr" style="right:846.75px;top:585.15px;font-size:14px;color:#00b0f0;letter-spacing:-0.75px">1086</div>
<div class="c cr" style="right:750.75px;top:585.15px;font-size:14px;color:#00b0f0;letter-spacing:-0.75px">1277</div>
<div class="c cr" style="right:654.75px;top:585.15px;font-size:14px;color:#00b0f0;letter-spacing:-0.75px">1012</div>
<div class="c cr" style="right:558.75px;top:585.15px;font-size:14px;color:#00b0f0;letter-spacing:-0.75px">1377</div>
<div class="c cr" style="right:451.75px;top:585.15px;font-size:14px;color:#00b0f0;letter-spacing:-0.75px">1015</div>
<div class="c cr" style="right:359.75px;top:585.15px;font-size:14px;color:#00b0f0;letter-spacing:-0.75px">1386</div>
<div class="c cr" style="right:269.75px;top:585.15px;font-size:14px;color:#00b0f0;letter-spacing:-0.75px">1031</div>
<div class="c cr" style="right:179.75px;top:585.15px;font-size:14px;color:#00b0f0;letter-spacing:-0.75px">1258</div>
<div class="c cr" style="right:88.75px;top:585.15px;font-size:14px;color:#00b0f0;letter-spacing:-0.75px">1079</div>
<div class="c cr" style="right:944.75px;top:607.15px;font-size:14px;color:#0070c0;letter-spacing:-0.75px">41,5</div>
<div class="c cr" style="right:846.75px;top:607.15px;font-size:14px;color:#0070c0;letter-spacing:-0.75px">56,7</div>
<div class="c cr" style="right:750.75px;top:607.15px;font-size:14px;color:#0070c0;letter-spacing:-0.75px">44,3</div>
<div class="c cr" style="right:654.75px;top:607.15px;font-size:14px;color:#0070c0;letter-spacing:-0.75px">57,6</div>
<div class="c cr" style="right:558.75px;top:607.15px;font-size:14px;color:#0070c0;letter-spacing:-0.75px">44,3</div>
<div class="c cr" style="right:451.75px;top:607.15px;font-size:14px;color:#0070c0;letter-spacing:-0.75px">55,5</div>
<div class="c cr" style="right:359.75px;top:607.15px;font-size:14px;color:#0070c0;letter-spacing:-0.75px">45,5</div>
<div class="c cr" style="right:269.75px;top:607.15px;font-size:14px;color:#0070c0;letter-spacing:-0.75px">58,7</div>
<div class="c cr" style="right:179.75px;top:607.15px;font-size:14px;color:#0070c0;letter-spacing:-0.75px">45,5</div>
<div class="c cr" style="right:88.75px;top:607.15px;font-size:14px;color:#0070c0;letter-spacing:-0.75px">59,5</div>
<div class="a" style="left:293px;top:601px;width:46px;height:1px;background:#000"></div>
<div class="a" style="left:388px;top:601px;width:49px;height:1px;background:#000"></div>
<div class="a" style="left:484px;top:601px;width:49px;height:1px;background:#000"></div>
<div class="a" style="left:580px;top:601px;width:49px;height:1px;background:#000"></div>
<div class="a" style="left:676px;top:601px;width:49px;height:1px;background:#000"></div>
<div class="a" style="left:784px;top:601px;width:48px;height:1px;background:#000"></div>
<div class="a" style="left:878px;top:601px;width:46px;height:1px;background:#000"></div>
<div class="a" style="left:1260px;top:75px;width:16px;height:886px;background:#dfe3e8"></div>
<div class="a" style="left:1276px;top:48px;width:1px;height:913px;background:#9aa2ac"></div>
<div class="a" style="left:1277px;top:48px;width:3px;height:913px;background:#eef1f6"></div>
<div class="a" style="left:1261px;top:75px;width:14px;height:8px;background:#fff;border:1px solid #8a929c"></div>
<div class="a" style="left:1265px;top:78px;width:7px;height:1px;background:#7a828c"></div>
<div class="a" style="left:1260px;top:84px;width:15px;height:16px;background:linear-gradient(90deg,#f4f6f8,#e2e5ea);border:1px solid #a9b0b8;border-radius:2px"></div>
<div class="a" style="left:1263px;top:89px;width:0;height:0;border-left:4.5px solid transparent;border-right:4.5px solid transparent;border-bottom:5px solid #3c3c3c"></div>
<div class="a" style="left:1260px;top:929px;width:15px;height:17px;background:linear-gradient(90deg,#f4f6f8,#e2e5ea);border:1px solid #a9b0b8;border-radius:2px"></div>
<div class="a" style="left:1263px;top:935px;width:0;height:0;border-left:4.5px solid transparent;border-right:4.5px solid transparent;border-top:5px solid #3c3c3c"></div>
<div class="a" style="left:1260px;top:440px;width:15px;height:356px;background:linear-gradient(90deg,#f2f4f7,#e0e4ea);border:1px solid #8f98a4;border-radius:2px"></div>
<div class="a" style="left:1264px;top:614px;width:7px;height:1px;background:#6a7280"></div>
<div class="a" style="left:1264px;top:616px;width:7px;height:1px;background:#6a7280"></div>
<div class="a" style="left:1264px;top:618px;width:7px;height:1px;background:#6a7280"></div>
<div class="a" style="left:1264px;top:620px;width:7px;height:1px;background:#6a7280"></div>
<div class="a" style="left:0;top:945px;width:1276px;height:17px;background:#dfe3e8"></div>
<div class="a" style="left:0;top:945px;width:1259px;height:2px;background:#a4abb4"></div>
<div class="a" style="left:0;top:947px;width:1259px;height:1px;background:#eef0f3"></div>
<div class="a" style="left:0;top:961px;width:1280px;height:1px;background:#8a929c"></div>
<div class="a" style="left:6px;top:950px;width:1px;height:7px;background:#3e4a5a"></div>
<div class="a" style="left:7px;top:950px;width:0;height:0;border-top:3.5px solid transparent;border-bottom:3.5px solid transparent;border-right:4px solid #3e4a5a"></div>
<div class="a" style="left:22px;top:950px;width:0;height:0;border-top:3.5px solid transparent;border-bottom:3.5px solid transparent;border-right:4px solid #3e4a5a"></div>
<div class="a" style="left:36px;top:950px;width:0;height:0;border-top:3.5px solid transparent;border-bottom:3.5px solid transparent;border-left:4px solid #3e4a5a"></div>
<div class="a" style="left:50px;top:950px;width:0;height:0;border-top:3.5px solid transparent;border-bottom:3.5px solid transparent;border-left:4px solid #3e4a5a"></div>
<div class="a" style="left:55px;top:950px;width:1px;height:7px;background:#3e4a5a"></div>
<svg class="a" style="left:0;top:946px" width="440" height="16" viewBox="0 0 440 16">
<path d="M101 15 L115 1 L420.5 1 L406.5 15 Z" fill="#e7eaee"/>
<path d="M101 15 L115 1 M156.5 15 L170.5 1 M211 15 L225 1 M373.5 15 L387.5 1 M406.5 15 L420.5 1" stroke="#9aa2ac" stroke-width="1" fill="none"/>
<path d="M157.5 15 L170.5 2 M212 15 L225 2 M374.5 15 L387.5 2 M102 15 L115 2" stroke="#ffffff" stroke-width="1" fill="none" opacity="0.8"/>
<path d="M62.5 0 L62.5 15 L101 15 L115 1 L115 0 Z" fill="#fff"/>
<path d="M62.5 0 L62.5 15.5" stroke="#9aa2ac" stroke-width="1"/>
</svg>
<div class="t" style="left:72px;top:949px;font-size:12px;font-weight:bold;color:#2a3448">СМТ</div>
<div class="t" style="left:116px;top:949px;font-size:12px;color:#3a4458;letter-spacing:-0.4px">СМТ-1</div>
<div class="t" style="left:171px;top:949px;font-size:12px;color:#3a4458;letter-spacing:-0.4px">СМТ-2</div>
<div class="t" style="left:228px;top:949px;font-size:12px;color:#3a4458;letter-spacing:0.25px">Отчет о совместимости</div>
<svg class="a" style="left:389px;top:948px" width="15" height="12" viewBox="0 0 15 12">
<path d="M3 3 L13 3 L13 9 L9 9 L8 11 L5 11 L4 9 L3 9 Z" fill="#d8e2f2" stroke="#4a5a9a" stroke-width="1"/>
<circle cx="3.5" cy="3.5" r="2.5" fill="#f8d060" stroke="#e08818" stroke-width="1"/>
</svg>
<div class="a" style="left:756px;top:947px;width:8px;height:15px;background:#fff;border:1px solid #7a828c"></div>
<div class="a" style="left:759px;top:950px;width:1px;height:8px;background:#6a7280"></div>
<div class="a" style="left:769px;top:950px;width:0;height:0;border-top:4.5px solid transparent;border-bottom:4.5px solid transparent;border-right:5px solid #3c3c3c"></div>
<div class="a" style="left:781px;top:946px;width:435px;height:16px;background:linear-gradient(180deg,#f2f4f7,#e0e4ea);border:1px solid #8f98a4;border-radius:2px"></div>
<div class="a" style="left:995px;top:951px;width:1px;height:7px;background:#6a7280"></div>
<div class="a" style="left:997px;top:951px;width:1px;height:7px;background:#6a7280"></div>
<div class="a" style="left:999px;top:951px;width:1px;height:7px;background:#6a7280"></div>
<div class="a" style="left:1001px;top:951px;width:1px;height:7px;background:#6a7280"></div>
<div class="a" style="left:1242px;top:950px;width:0;height:0;border-top:4.5px solid transparent;border-bottom:4.5px solid transparent;border-left:5px solid #3c3c3c"></div>
<div class="a" style="left:1252px;top:947px;width:8px;height:15px;background:#fff;border:1px solid #7a828c"></div>
<div class="a" style="left:1255px;top:950px;width:1px;height:8px;background:#6a7280"></div>
<div class="a" style="left:0;top:962px;width:1280px;height:22px;background:linear-gradient(180deg,#f4f5f7 0%,#e8eaee 50%,#d6d9de 100%)"></div>
<div class="t" style="left:7.5px;top:967.5px;font-size:12px;color:#2e3a4a">Готово</div>
<div class="a" style="left:54px;top:963px;width:1px;height:20px;background:#a0a6ae;box-shadow:1px 0 0 #fff"></div>
<div class="a" style="left:1044px;top:963px;width:1px;height:20px;background:#a0a6ae;box-shadow:1px 0 0 #fff"></div>
<div class="a" style="left:1049px;top:964px;width:19px;height:19px;background:linear-gradient(180deg,#fff2b8,#ffd860);border:1px solid #e0b048;border-radius:3px"></div>
<svg class="a" style="left:1052px;top:968px" width="14" height="11" viewBox="0 0 14 11">
<rect x="0.5" y="0.5" width="13" height="10" fill="#fff" stroke="#3a4050"/>
<path d="M0 3.8 H14 M0 7.2 H14 M4.8 0 V11 M9.2 0 V11" stroke="#3a4050" stroke-width="1.4"/>
</svg>
<div class="a" style="left:1070px;top:967px;width:14px;height:13px;background:#7a808a;border:1px solid #5a606a"></div>
<div class="a" style="left:1073px;top:969px;width:8px;height:9px;background:#f4f4f4"></div>
<div class="a" style="left:1089px;top:967px;width:14px;height:13px;background:#9aa0aa;border:1px solid #5a606a"></div>
<div class="a" style="left:1090px;top:968px;width:4px;height:7px;background:#fff"></div>
<div class="a" style="left:1095px;top:968px;width:3px;height:7px;background:#fff"></div>
<div class="t" style="left:1115px;top:967px;font-size:12px;color:#2e3a4a;letter-spacing:-1px">70%</div>
<div class="a" style="left:1160px;top:972px;width:100px;height:1px;background:#8a929c"></div>
<div class="a" style="left:1210px;top:969px;width:1px;height:7px;background:#8a929c"></div>
<div class="a" style="left:1144px;top:965px;width:16px;height:16px;border-radius:50%;background:linear-gradient(#fafbfc,#dfe3e8);border:1px solid #7a828c"></div>
<div class="a" style="left:1148px;top:972px;width:8px;height:2px;background:#3a3a3a"></div>
<div class="a" style="left:1260px;top:965px;width:16px;height:16px;border-radius:50%;background:linear-gradient(#fafbfc,#dfe3e8);border:1px solid #7a828c"></div>
<div class="a" style="left:1264px;top:972px;width:8px;height:2px;background:#3a3a3a"></div>
<div class="a" style="left:1267px;top:969px;width:2px;height:8px;background:#3a3a3a"></div>
<svg class="a" style="left:1190px;top:965px" width="11" height="14" viewBox="0 0 11 14">
<path d="M1.5 0.5 H9.5 V9 L5.5 13 L1.5 9 Z" fill="#f6f7f9" stroke="#7a828c"/>
</svg>
<div class="a" style="left:0;top:984px;width:1280px;height:40px;background:linear-gradient(90deg,#3a6aa6 0px,#3e70ae 50px,#4a86c8 90px,#5592d6 150px,#5a96d8 180px,#5a94d4 240px,#4a78b8 300px,#3f5e9c 310px,#3e5a98 420px,#4a66a4 500px,#5a78b0 506px,#b8d2ea 510px,#b0cce8 550px,#52707e 556px,#4a6470 590px,#a8c4e2 596px,#b6d2ec 650px,#b0cce6 700px,#a8c4dc 740px,#98b0c4 760px,#3e4e56 790px,#384850 830px,#3a4a62 880px,#37507e 930px,#3a5a92 985px,#3c68a6 1000px,#3d6aa6 1136px)"></div>
<div class="a" style="left:0;top:984px;width:1280px;height:40px;overflow:hidden">
<div class="a" style="left:555px;top:-4px;width:40px;height:24px;background:#4e6676;filter:blur(2px)"></div>
<div class="a" style="left:660px;top:-4px;width:40px;height:26px;background:rgba(110,135,160,0.35);filter:blur(4px)"></div>
<div class="a" style="left:553px;top:18px;width:215px;height:26px;background:linear-gradient(90deg,rgba(128,148,130,0.85),rgba(150,170,158,0.75) 30%,rgba(160,178,168,0.7) 60%,rgba(140,158,148,0.8) 100%);filter:blur(2.5px)"></div>
<div class="a" style="left:700px;top:-10px;width:220px;height:60px;filter:blur(5px)"><div class="a" style="left:0;top:0;width:220px;height:60px;background:#3c4c52;clip-path:polygon(68px 0,220px 0,220px 60px,10px 60px)"></div></div>
<div class="a" style="left:730px;top:20px;width:120px;height:24px;background:rgba(95,112,100,0.55);filter:blur(4px)"></div>
</div>
<div class="a" style="left:0;top:984px;width:1280px;height:1px;background:#1c2636"></div>
<div class="a" style="left:0;top:985px;width:1136px;height:1px;background:rgba(200,225,250,0.55)"></div>
<svg class="a" style="left:7px;top:985px" width="40" height="40" viewBox="0 0 40 40">
<defs>
<radialGradient id="orbg" cx="50%" cy="90%" r="70%"><stop offset="0" stop-color="#10e0ff"/><stop offset="0.45" stop-color="#1a7cc0"/><stop offset="1" stop-color="#0a3a78"/></radialGradient>
<linearGradient id="orbh" x1="0" y1="0" x2="0" y2="1"><stop offset="0" stop-color="#e8eef4"/><stop offset="1" stop-color="#6a8aa8"/></linearGradient>
</defs>
<circle cx="20" cy="19" r="19" fill="#dce8f4" opacity="0.55"/>
<circle cx="20" cy="19" r="18" fill="url(#orbg)" stroke="#0a2a58" stroke-width="1"/>
<path d="M4 18 A16 16 0 0 1 36 18 C30 20 10 20 4 18 Z" fill="url(#orbh)" opacity="0.95"/>
<path d="M11 10 C14 8.5 17 9 19 10 L17.8 18 C15.5 17 12.5 17 10 18 Z" fill="#f05a20"/>
<path d="M20 10.5 C22.5 12 25.5 12 28.5 10.5 L27 18.8 C24 20 21 19.5 18.8 18.5 Z" fill="#7ac040"/>
<path d="M9.8 19 C12.5 18 15.5 18 17.6 19 L16.4 27 C14 26 11 26 8.5 27.5 Z" fill="#2a98e0"/>
<path d="M18.6 19.5 C21 20.5 24 21 26.8 19.8 L25.5 28 C22.5 29.2 19.5 28.8 17.4 27.6 Z" fill="#ffc020"/>
</svg>
<svg class="a" style="left:72px;top:988px" width="33" height="36" viewBox="0 0 33 36">
<defs><linearGradient id="pin" x1="0" y1="0" x2="0" y2="1"><stop offset="0" stop-color="#ffb010"/><stop offset="0.55" stop-color="#ff8010"/><stop offset="1" stop-color="#ff3a00"/></linearGradient></defs>
<g transform="translate(0,-2)"><rect x="3" y="12" width="28" height="21" fill="#f6f6f2"/>
<rect x="22" y="13" width="8" height="7" fill="#88b060"/><rect x="20" y="22" width="10" height="10" fill="#90b068"/>
<path d="M5 32 L8 24 M9 32 L12 23 M13 32 L15 25 M17 32 L18 26 M23 14 L25 20 M21 26 L24 29" stroke="#a8a498" stroke-width="1.6"/>
<path d="M17 32 L19 20 L21 14 M19 18 L30 21" stroke="#3aa0d8" stroke-width="1.5" fill="none"/></g>
<path d="M11 1 C4.5 1 1 6 1 11 C1 17 8 22.5 11 29 C14 22.5 21 17 21 11 C21 6 17.5 1 11 1 Z" fill="url(#pin)"/>
<path d="M9.5 7.5 C10 3.5 18 3 18 8.5 C18 11.5 13 14 10 19 L18.5 19" fill="none" stroke="#fff" stroke-width="2.6"/>
</svg>
<svg class="a" style="left:134px;top:988px" width="34" height="36" viewBox="0 0 34 36">
<defs><linearGradient id="gearg" x1="0" y1="0" x2="1" y2="1"><stop offset="0" stop-color="#18d8ff"/><stop offset="0.5" stop-color="#1890f0"/><stop offset="1" stop-color="#10c8ff"/></linearGradient>
<linearGradient id="og" x1="0" y1="0" x2="1" y2="0"><stop offset="0" stop-color="#a00808"/><stop offset="0.3" stop-color="#ff5050"/><stop offset="0.6" stop-color="#d01010"/><stop offset="1" stop-color="#900000"/></linearGradient></defs>
<circle cx="16" cy="9.5" r="7.2" fill="none" stroke="url(#gearg)" stroke-width="3.6" stroke-dasharray="2.2 1.6"/>
<ellipse cx="16" cy="9.5" rx="6" ry="5.2" transform="rotate(25 16 9.5)" fill="none" stroke="url(#gearg)" stroke-width="3.2"/>
<ellipse cx="5" cy="28" rx="4" ry="3" fill="#3a5070" opacity="0.55"/>
<ellipse cx="9.5" cy="27" rx="4.5" ry="7" fill="none" stroke="url(#og)" stroke-width="3"/>
<text x="16" y="31" font-family="Liberation Sans" font-size="11" fill="#c81818" letter-spacing="0.5" textLength="14">AC</text>
</svg>
<div class="a" style="left:183px;top:985px;width:60px;height:39px;border:1px solid #18283c;border-radius:3px;background:linear-gradient(160deg,#a8cdf0 0%,#74a8e0 35%,#5a96d8 60%,#5a94d4 100%);box-shadow:inset 0 0 0 1px rgba(220,235,255,0.7)"></div>
<svg class="a" style="left:197px;top:989px" width="32" height="31" viewBox="0 0 32 31">
<defs>
<radialGradient id="ffg" cx="70%" cy="25%" r="80%"><stop offset="0" stop-color="#6ad0ff"/><stop offset="0.5" stop-color="#2a70c8"/><stop offset="1" stop-color="#142a78"/></radialGradient>
<linearGradient id="fff" x1="0.8" y1="0" x2="0.2" y2="1"><stop offset="0" stop-color="#ffd030"/><stop offset="0.35" stop-color="#f89020"/><stop offset="1" stop-color="#e03a10"/></linearGradient>
</defs>
<circle cx="17" cy="13.5" r="11.5" fill="url(#ffg)"/>
<path d="M4 2 L7.5 9 C1.5 14 2 23 9 27.5 C15.5 31.5 26 30.5 29.5 22 C31.5 16.5 30 9 25.5 4.5 C27 12 24.5 17 19.5 19 C15 20.5 11.5 18.5 11 15 C13 15.5 15 15 15.5 13.5 C14 12.5 13.5 11.5 15.5 10 C13 8.5 10 7.5 8 5.5 Z" fill="url(#fff)"/>
<path d="M25.5 4.5 C30 9 31.5 16.5 29.5 22 C29 15 28 9 25.5 4.5 Z" fill="#ffe040"/>
</svg>
<div class="a" style="left:245px;top:985px;width:60px;height:39px;border:1px solid #18283c;border-radius:3px;background:linear-gradient(90deg,#dae8f6 0%,#c4d8ee 40%,#98aacc 80%,#a8b8d6 100%);box-shadow:inset 0 0 0 1px rgba(240,248,255,0.9)"></div>
<svg class="a" style="left:258px;top:987px" width="32" height="32" viewBox="0 0 32 32">
<defs><linearGradient id="xlg" x1="0" y1="0" x2="1" y2="0.6"><stop offset="0" stop-color="#e4f2e0"/><stop offset="0.6" stop-color="#a8d8a0"/><stop offset="1" stop-color="#3aa048"/></linearGradient></defs>
<path d="M7 1.5 H29.5 V30 H1.5 V7 C1.5 3.5 3.5 1.5 7 1.5 Z" fill="#fff" stroke="#1a7a2a" stroke-width="1.5"/>
<path d="M7 3.5 H28 V19 C20 16 11 17 3.5 21 V8 C3.5 5 5 3.5 7 3.5 Z" fill="url(#xlg)"/>
<path d="M5.5 6 H11 L19 20 H13.5 Z" fill="#6cc040"/>
<path d="M14.5 6 H20 L14.5 14 L12 10.5 Z" fill="#1e6a44"/>
<path d="M5 20 H10.5 L13 15.5 L10.5 12 Z" fill="#2a8a34"/>
<path d="M15.5 12 L31 16.5 L27.5 29 L9.5 25 Z" fill="#fbfdf9"/>
<path d="M17 16.5 L22 18 M23 18.3 L29 20 M16 19.5 L21 21 M22 21.3 L28 23 M12 22 L18 23.5 M19 23.8 L27 26" stroke="#58b050" stroke-width="1.3"/>
</svg>
<div class="a" style="left:830px;top:986px;width:90px;height:38px;background:rgba(110,125,120,0.35);filter:blur(8px)"></div>
<div class="t" style="left:842px;top:996px;font-size:12px;color:#f0f0f0">RU</div>
<div class="a" style="left:872px;top:997px;width:16px;height:16px;border-radius:50%;background:radial-gradient(circle at 45% 35%,#9ad860,#3a9a18 70%,#2a7a10)"></div>
<div class="t" style="left:878px;top:999px;font-size:11px;font-weight:bold;color:#fff">i</div>
<svg class="a" style="left:895px;top:997px" width="17" height="16" viewBox="0 0 17 16">
<path d="M1 5 L4 5 L8 1 L8 15 L4 11 L1 11 Z" fill="#f4f4f4"/>
<path d="M10 5 C11 6.5 11 9.5 10 11 M12 3 C14 6 14 10 12 13" fill="none" stroke="#f4f4f4" stroke-width="1.3"/>
</svg>
<div class="a" style="left:920px;top:997px;width:16px;height:16px;background:#00008a"></div>
<div class="t" style="left:921px;top:999px;font-size:11px;color:#fff">Ru</div>
<svg class="a" style="left:944px;top:996px" width="17" height="18" viewBox="0 0 17 18">
<rect x="3" y="5" width="12" height="10" fill="#2a3a4a" stroke="#f0f0f0" stroke-width="1.2"/>
<path d="M2 2 L2 12 M5 2 L5 7 M2 16 L8 16" stroke="#f0f0f0" stroke-width="1.4"/>
<circle cx="12" cy="13" r="4" fill="#2a9ad8"/><path d="M10 12 C11 10 13 11 14 13" stroke="#4ac040" stroke-width="2" fill="none"/>
</svg>
<svg class="a" style="left:968px;top:999px" width="18" height="12" viewBox="0 0 18 12">
<path d="M1 6 C5 0 13 0 17 3 L17 11 L8 11 C5 11 2 9 1 6 Z" fill="#6ab818"/>
<path d="M5 6 C7 3 11 3 13 6 C11 9 7 9 5 6 Z" fill="none" stroke="#2a6a08" stroke-width="1.2"/>
</svg>
<svg class="a" style="left:992px;top:996px" width="17" height="18" viewBox="0 0 17 18">
<path d="M4 11 L2 17 L5 15 L7 17 L8 12 Z M13 11 L15 17 L12 15 L10 17 L9 12 Z" fill="#e8e8e8"/>
<circle cx="8.5" cy="7.5" r="6.5" fill="#e8f0e8" stroke="#8a9a8a" stroke-width="0.8"/>
<circle cx="9.5" cy="7" r="5" fill="#3ab030"/>
<path d="M7 7 L9 9 L12.5 5" fill="none" stroke="#fff" stroke-width="1.6"/>
</svg>
<svg class="a" style="left:1015px;top:996px" width="20" height="18" viewBox="0 0 20 18">
<rect x="4" y="0.5" width="10" height="16" fill="#7ab8f0" stroke="#3a78c8" stroke-width="0.8"/>
<rect x="6" y="3" width="2.6" height="2.6" fill="#f05020"/><rect x="9" y="3" width="2.6" height="2.6" fill="#60b030"/>
<rect x="6" y="6" width="2.6" height="2.6" fill="#2a80e0"/><rect x="9" y="6" width="2.6" height="2.6" fill="#f8c020"/>
<path d="M2 12 C0 9 8 5 17 6 C19 6.5 19 8 18 9 C17 7.5 8 8 3 12 Z" fill="#f09020"/>
<path d="M3 13 C6 15 12 14 14 12" stroke="#f09020" stroke-width="1.4" fill="none"/>
</svg>
<svg class="a" style="left:1040px;top:996px" width="17" height="18" viewBox="0 0 17 18">
<path d="M2.5 1 L2.5 17" stroke="#1a2430" stroke-width="2.6"/><path d="M2.5 1.5 L2.5 16.5" stroke="#f4f4f4" stroke-width="1.2"/>
<path d="M4 2.5 C7 1.5 9 4.5 15.5 4 L13.5 7.5 L15.5 10 C10 11 8 8 4 9.5 Z" fill="#f4f4f4" stroke="#1a2430" stroke-width="0.9"/>
</svg>
<svg class="a" style="left:1063px;top:997px" width="18" height="17" viewBox="0 0 18 17">
<circle cx="10.5" cy="8" r="7.5" fill="#f8a020"/>
<text x="9" y="13" font-family="Liberation Sans" font-size="12" font-weight="bold" fill="#fff">2</text>
<circle cx="5.5" cy="11" r="5.5" fill="#40a820"/>
<rect x="5" y="7.5" width="1.4" height="4" fill="#fff"/><rect x="5" y="12.5" width="1.4" height="1.4" fill="#fff"/>
</svg>
<svg class="a" style="left:1087px;top:996px" width="17" height="18" viewBox="0 0 17 18">
<rect x="0.5" y="0.5" width="16" height="17" rx="2" fill="#e86a18" stroke="#b84a08"/>
<path d="M4 12 L13 12 M3 14.5 L14 14.5" stroke="#fff" stroke-width="1.2"/>
<path d="M8 3 C10 5 6 6 8 9 M10 4 C11 6 9 7 10 9" stroke="#fff" stroke-width="1.2" fill="none"/>
</svg>
<svg class="a" style="left:1111px;top:997px" width="18" height="16" viewBox="0 0 18 16">
<rect x="4.5" y="0.5" width="9" height="5" fill="#fff" stroke="#9a9ea4" stroke-width="0.8"/>
<rect x="1" y="5" width="16" height="7" rx="1" fill="#70747a" stroke="#3a3e44" stroke-width="0.8"/>
<rect x="1.5" y="5.5" width="15" height="2.5" fill="#a8acb2"/>
<rect x="4.5" y="10" width="9" height="5.5" fill="#fff" stroke="#9a9ea4" stroke-width="0.8"/>
<rect x="7" y="12" width="3" height="1.5" fill="#3a6ab8"/>
</svg>
<div class="a" style="left:1136px;top:985px;width:129px;height:39px;background:#fff"></div>
<div class="a" style="left:1136px;top:1021px;width:129px;height:3px;background:#3d6aa6"></div>
<svg class="a" style="left:1162px;top:997px" width="80" height="14" viewBox="0 0 80 14"><g fill="none" stroke="#4a88d0" stroke-width="1.9" stroke-linecap="round"><path transform="translate(0,0)" d="M1.3 0.8 L6.7 0.8 M7.4 1.5 L7.4 5.8 M1.3 6.5 L6.7 6.5 M0.6 7.2 L0.6 11.5 M1.3 12.2 L6.7 12.2" /><path transform="translate(11,0)" d="M7.4 1.5 L7.4 5.8 M7.4 7.2 L7.4 11.5" /><path transform="translate(30,0)" d="M1.3 0.8 L6.7 0.8 M0.6 1.5 L0.6 5.8 M1.3 6.5 L6.7 6.5 M7.4 7.2 L7.4 11.5 M1.3 12.2 L6.7 12.2" /><path transform="translate(39,0)" d="M1.3 0.8 L6.7 0.8 M7.4 1.5 L7.4 5.8 M7.4 7.2 L7.4 11.5 M1.3 12.2 L6.7 12.2 M0.6 1.5 L0.6 5.8 M1.3 6.5 L6.7 6.5" /><path transform="translate(58,0)" d="M7.4 1.5 L7.4 5.8 M7.4 7.2 L7.4 11.5" /><path transform="translate(68,0)" d="M7.4 1.5 L7.4 5.8 M7.4 7.2 L7.4 11.5" /></g><rect x="24" y="3.5" width="1.8" height="1.8" fill="#4a88d0"/><rect x="24" y="8.5" width="1.8" height="1.8" fill="#4a88d0"/><rect x="53" y="3.5" width="1.8" height="1.8" fill="#4a88d0"/><rect x="53" y="8.5" width="1.8" height="1.8" fill="#4a88d0"/></svg>
<div class="t" style="left:1145px;top:997px;font-size:8px;color:#4a88d0">10</div>
<div class="t" style="left:1141px;top:1005px;font-size:9px;color:#4a88d0;letter-spacing:-0.4px">JAN</div>
<div class="t" style="left:1243px;top:1006px;font-size:9px;color:#4a88d0;letter-spacing:0.9px">FRI</div>
<div class="a" style="left:1265px;top:985px;width:15px;height:39px;background:linear-gradient(180deg,#6a98d0,#3a68a8 50%,#4a7ab8);border:1px solid #1c2a40;box-shadow:inset 0 0 0 1px rgba(200,220,245,0.6)"></div>
</body></html>
